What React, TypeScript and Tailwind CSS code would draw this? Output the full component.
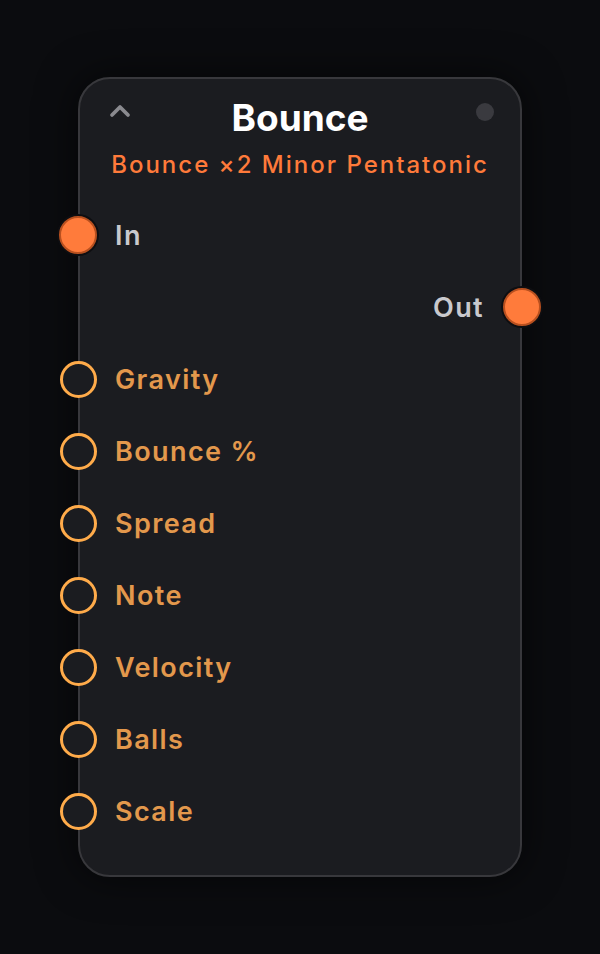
import React from 'react';
import { ChevronUp } from 'lucide-react';

const params = ['Gravity', 'Bounce %', 'Spread', 'Note', 'Velocity', 'Balls', 'Scale'];

const font = { fontFamily: 'Inter, "Noto Sans", sans-serif' };

const App: React.FC = () => {
  return (
    <div className="min-h-screen w-full flex items-center justify-center bg-[#0b0c0f]" style={font}>
      <div className="relative w-[444px] rounded-[32px] border-2 border-[#38383c] bg-[#1b1c20] pt-[16px] pb-[27px] shadow-[0_0_40px_rgba(0,0,0,0.6)]">
        <div className="grid grid-cols-[1fr_auto_1fr] items-start px-[24px]">
          <ChevronUp className="mt-[0px] h-[32px] w-[32px] text-[#8a8a8f]" strokeWidth={2.8} />
          <h1 className="text-[37px] leading-[46px] font-bold text-white">Bounce</h1>
          <div className="justify-self-end mt-[8px] mr-[2px] h-[18px] w-[18px] rounded-full bg-[#3a3a3f]" />
        </div>
        <div className="mt-[8px] text-center text-[24px] leading-[32px] font-medium text-[#ff7a3a] tracking-[2px]">
          Bounce ×2 Minor Pentatonic
        </div>

        <div className="mt-[19px] flex flex-col">
          <div className="relative flex h-[72px] items-center pl-[35px]">
            <span className="absolute left-[-21px] top-[16px] h-[38px] w-[38px] rounded-full border-2 border-[#b8501f] bg-[#ff7b3b] shadow-[0_0_0_2px_#0e0e11]" />
            <span className="text-[27px] font-semibold text-[#c9c9cd] tracking-[1.4px]">In</span>
          </div>
          <div className="relative flex h-[72px] items-center justify-end pr-[36px]">
            <span className="text-[27px] font-semibold text-[#c9c9cd] tracking-[1.4px]">Out</span>
            <span className="absolute right-[-21px] top-[16px] h-[38px] w-[38px] rounded-full border-2 border-[#b8501f] bg-[#ff7b3b] shadow-[0_0_0_2px_#0e0e11]" />
          </div>
          {params.map(p => (
            <div key={p} className="relative flex h-[72px] items-center pl-[35px]">
              <span className="absolute left-[-20px] top-[17px] h-[37px] w-[37px] rounded-full border-[3px] border-[#ffab4a] bg-[#1b1c20]" />
              <span className="text-[27px] font-semibold text-[#e3984c] tracking-[1.4px]">{p}</span>
            </div>
          ))}
        </div>
      </div>
    </div>
  );
};

export default App;
